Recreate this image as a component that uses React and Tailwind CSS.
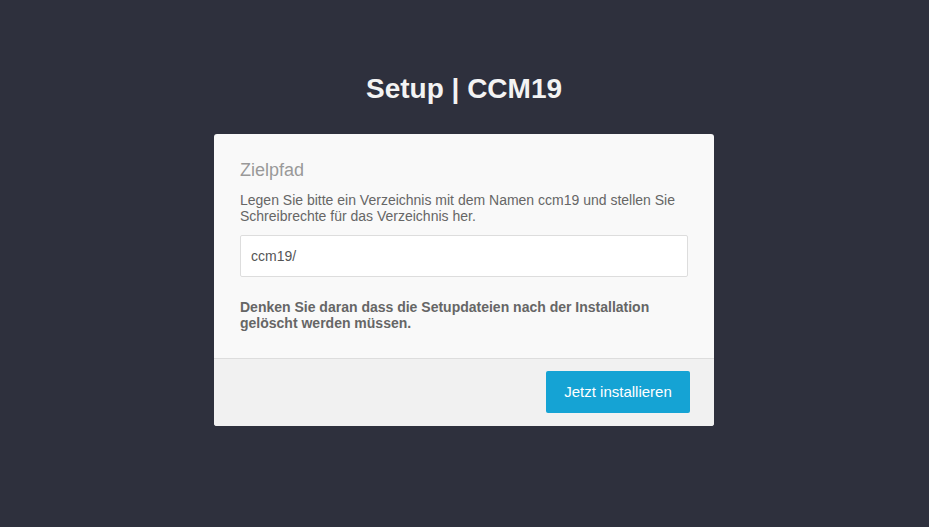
import React from 'react'

const App = () => {
    return (
        <div className="min-h-screen bg-[#2e303d] flex flex-col items-center pt-[74px] pr-px font-['Liberation_Sans',Arial,sans-serif]">
            <h1 className="text-[28px] leading-[30px] font-bold text-[#f3f3f3]">Setup | CCM19</h1>

            <div className="mt-[30px] w-[500px] rounded-[3px] overflow-hidden bg-[#f9f9f9]">
                {/* body */}
                <div className="px-[26px] pt-[25px] pb-[27px]">
                    <h2 className="text-[18px] leading-[22px] text-[#999999]">Zielpfad</h2>
                    <p className="mt-[11px] text-[14px] leading-[16px] text-[#666666]">
                        Legen Sie bitte ein Verzeichnis mit dem Namen ccm19 und stellen Sie Schreibrechte für das Verzeichnis her.
                    </p>
                    <input
                        type="text"
                        defaultValue="ccm19/"
                        className="mt-[11px] block w-full h-[42px] px-[10px] bg-white border border-[#dddddd] rounded-[2px] text-[14px] text-[#555555] outline-none"
                    />
                    <p className="mt-[22px] text-[14px] leading-[16px] font-bold text-[#666666]">
                        Denken Sie daran dass die Setupdateien nach der Installation gelöscht werden müssen.
                    </p>
                </div>

                {/* footer */}
                <div className="border-t border-[#dddddd] bg-[#f1f1f1] flex justify-end pt-[12px] pb-[13px] pr-[24px]">
                    <button className="h-[42px] w-[144px] rounded-[2px] bg-[#15a3d4] text-white text-[15px]">
                        Jetzt installieren
                    </button>
                </div>
            </div>
        </div>
    )
}

export default App
